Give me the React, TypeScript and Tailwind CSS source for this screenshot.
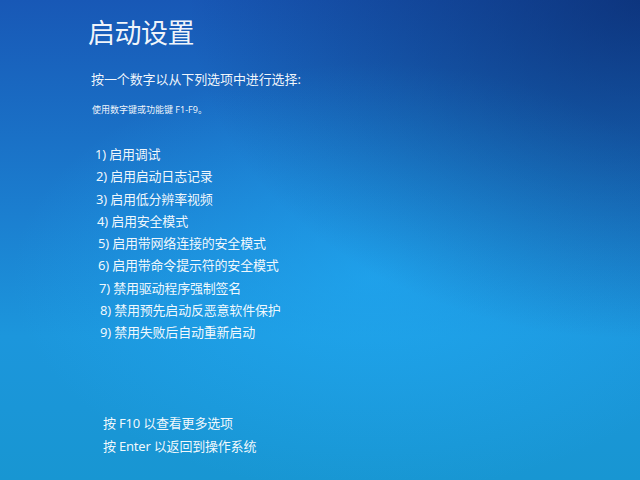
import React from "react";

const items = [
  { n: "1)", t: "启用调试", c: "ml-[0px]" },
  { n: "2)", t: "启用启动日志记录", c: "ml-[1px]" },
  { n: "3)", t: "启用低分辨率视频", c: "ml-[1px]" },
  { n: "4)", t: "启用安全模式", c: "ml-[2px]" },
  { n: "5)", t: "启用带网络连接的安全模式", c: "ml-[3px]" },
  { n: "6)", t: "启用带命令提示符的安全模式", c: "ml-[3px]" },
  { n: "7)", t: "禁用驱动程序强制签名", c: "ml-[4px]" },
  { n: "8)", t: "禁用预先启动反恶意软件保护", c: "ml-[5px]" },
  { n: "9)", t: "禁用失败后自动重新启动", c: "ml-[5px]" },
];

export default function App() {
  return (
    <div className="w-full h-screen overflow-hidden text-white/95 font-['Noto_Sans','Noto_Sans_CJK_SC',sans-serif] bg-[radial-gradient(ellipse_at_100%_0%,rgba(6,30,90,0.6)_0%,transparent_50%),radial-gradient(ellipse_75%_60%_at_58%_58%,rgba(34,178,250,0.55)_0%,transparent_75%),linear-gradient(180deg,#1858b6_0%,#1b7fd0_45%,#1c96dc_70%,#1896d2_100%)]">
      <div className="pl-[88px] pt-[14px] flex flex-col">
        <h1 className="text-[27px] leading-[38px] font-normal tracking-[-0.5px]">启动设置</h1>
        <p className="mt-[17px] ml-[3px] text-[13px] leading-[20px] tracking-[-0.1px]">
          按一个数字以从下列选项中进行选择:
        </p>
        <p className="mt-[14px] ml-[4px] text-[9px] leading-[14px]">使用数字键或功能键 F1-F9。</p>
        <ul className="mt-[26px] ml-[7px] flex flex-col">
          {items.map((it) => (
            <li key={it.n} className={`${it.c} text-[13px] leading-[22.3px] tracking-[-0.2px]`}>
              {it.n} {it.t}
            </li>
          ))}
        </ul>
        <div className="mt-[68px] ml-[15px] flex flex-col text-[13px] leading-[23px] tracking-[-0.2px]">
          <p>按 F10 以查看更多选项</p>
          <p>按 Enter 以返回到操作系统</p>
        </div>
      </div>
    </div>
  );
}
